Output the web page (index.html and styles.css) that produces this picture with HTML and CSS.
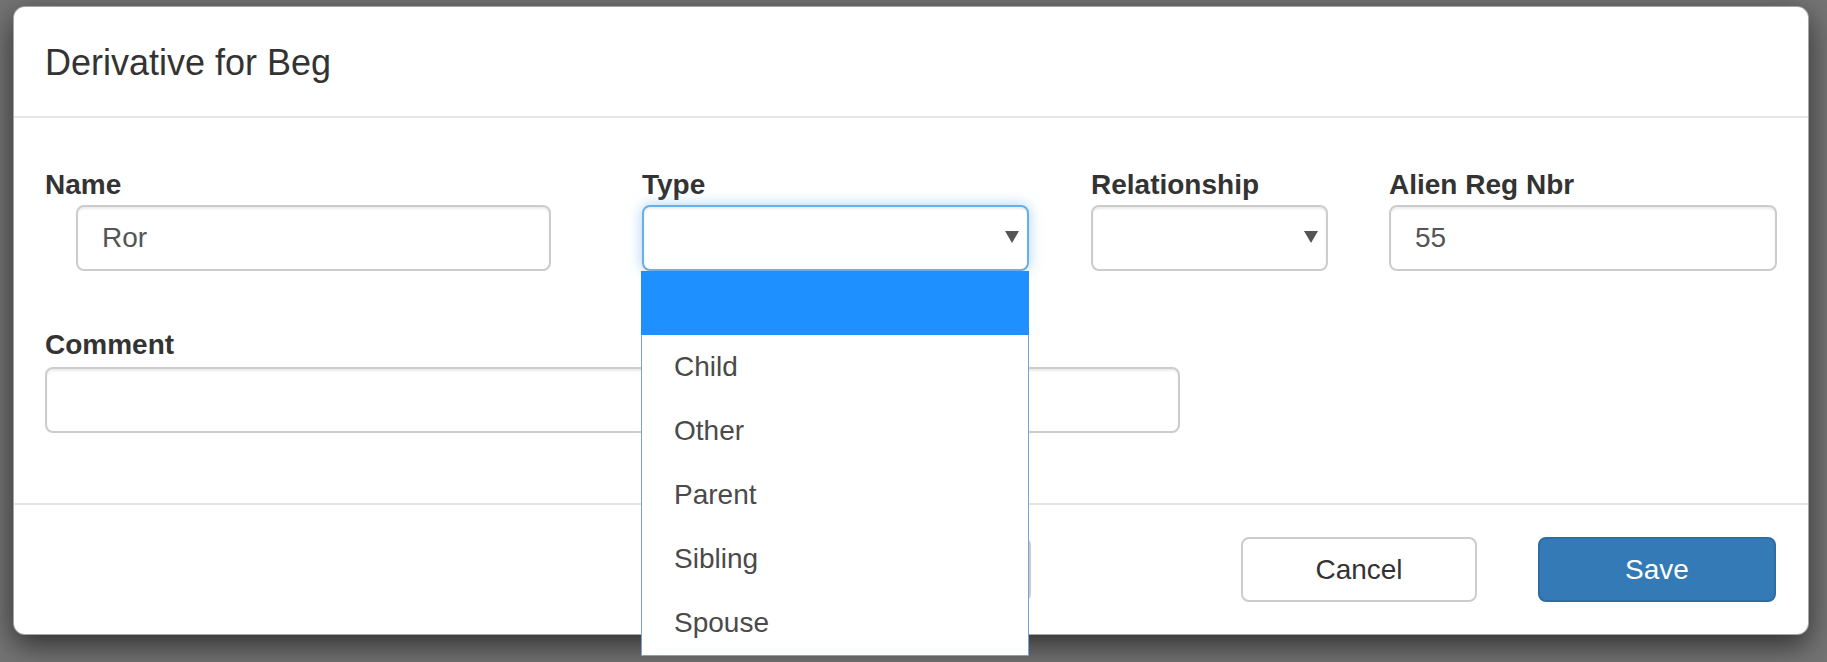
FILE: index.html
```html
<!DOCTYPE html>
<html lang="en">
<head>
<meta charset="utf-8">
<title>Derivative</title>
<link rel="stylesheet" href="styles.css">
</head>
<body>
<div class="backdrop">
  <div class="modal">
    <div class="modal-header">
      <h4 class="modal-title">Derivative for Beg</h4>
    </div>
    <div class="modal-body">
      <div class="row">
        <div class="col col-name">
          <label>Name</label>
          <input class="form-control indent" type="text" value="Ror">
        </div>
        <div class="col col-type">
          <label>Type</label>
          <div class="select focus">
            <svg class="caret" width="14" height="12" viewBox="0 0 14 12"><path d="M0 0H14L7 12Z" fill="#555"/></svg>
          </div>
          <ul class="dropdown">
            <li class="selected">&nbsp;</li>
            <li>Child</li>
            <li>Other</li>
            <li>Parent</li>
            <li>Sibling</li>
            <li>Spouse</li>
          </ul>
        </div>
        <div class="col col-rel">
          <label>Relationship</label>
          <div class="select">
            <svg class="caret" width="14" height="12" viewBox="0 0 14 12"><path d="M0 0H14L7 12Z" fill="#555"/></svg>
          </div>
        </div>
        <div class="col col-alien">
          <label>Alien Reg Nbr</label>
          <input class="form-control" type="text" value="55">
        </div>
      </div>
      <div class="group-comment">
        <label>Comment</label>
        <input class="form-control comment" type="text" value="">
      </div>
    </div>
    <div class="modal-footer">
      <button class="btn btn-default ghost" type="button"></button>
      <button class="btn btn-default" type="button">Cancel</button>
      <button class="btn btn-primary" type="button">Save</button>
    </div>
  </div>
</div>
</body>
</html>
```

FILE: styles.css
```css
* {
  box-sizing: border-box;
}

html, body {
  margin: 0;
  padding: 0;
  height: 662px;
  overflow: hidden;
}

body {
  background: #747474;
  font-family: "Liberation Sans", Arial, sans-serif;
  color: #333;
}

.backdrop {
  padding: 6px 0 0 13px;
}

.modal {
  width: 1796px;
  background: #fff;
  border: 1px solid rgba(0, 0, 0, 0.35);
  border-radius: 12px;
  box-shadow: 0 10px 30px rgba(0, 0, 0, 0.6);
}

.modal-header {
  padding: 30px 31px 28px 31px;
  border-bottom: 2px solid #e5e5e5;
}

.modal-title {
  margin: 0;
  font-size: 36px;
  line-height: 51px;
  font-weight: normal;
  color: #333;
}

.modal-body {
  padding: 47px 31px 70px 29px;
}

label {
  display: block;
  font-size: 28px;
  line-height: 40px;
  font-weight: bold;
  color: #333;
}

.row {
  display: flex;
}

.col {
  position: relative;
}

.col-name {
  width: 506px;
  margin-left: 2px;
  margin-right: 91px;
}

.col-type {
  width: 387px;
  margin-right: 62px;
}

.col-rel {
  width: 237px;
  margin-right: 61px;
}

.col-alien {
  flex: 1;
}

.form-control,
.select {
  display: block;
  width: 100%;
  height: 66px;
  padding: 10px 24px;
  font-family: "Liberation Sans", Arial, sans-serif;
  font-size: 28px;
  color: #555;
  background: #fff;
  border: 2px solid #ccc;
  border-radius: 8px;
  box-shadow: inset 0 2px 2px rgba(0, 0, 0, 0.075);
  outline: none;
}

.indent {
  margin-left: 31px;
  width: calc(100% - 31px);
}

.select {
  position: relative;
}

.select.focus {
  border-color: #66afe9;
  box-shadow: inset 0 2px 2px rgba(0, 0, 0, 0.075), 0 0 14px rgba(102, 175, 233, 0.55);
}

.caret {
  position: absolute;
  right: 8px;
  top: 24px;
}

.dropdown {
  position: absolute;
  left: -1px;
  top: 106px;
  width: 388px;
  margin: 0;
  padding: 0;
  list-style: none;
  background: #fff;
  border: 1px solid #7d9fd8;
  border-top: none;
  z-index: 10;
}

.dropdown li {
  height: 64px;
  line-height: 64px;
  padding-left: 32px;
  font-size: 28px;
  color: #4a4a4a;
}

.dropdown li.selected {
  background: #1e90ff;
  margin: 0 -1px;
}

.group-comment {
  margin-top: 54px;
  margin-left: 2px;
}

.group-comment label {
  margin-bottom: 2px;
}

.comment {
  width: 1135px;
}

.modal-footer {
  display: flex;
  justify-content: flex-end;
  padding: 32px 32px 32px 29px;
  border-top: 2px solid #e5e5e5;
}

.btn {
  height: 65px;
  font-family: "Liberation Sans", Arial, sans-serif;
  font-size: 28px;
  border-radius: 8px;
  border: 2px solid #ccc;
  padding: 0;
}

.btn-default {
  width: 236px;
  background: #fff;
  color: #333;
}

.ghost {
  margin-right: 210px;
}

.btn-default + .btn-primary {
  margin-left: 61px;
}

.btn-primary {
  width: 238px;
  background: #337ab7;
  border-color: #2e6da4;
  color: #fff;
}
```
